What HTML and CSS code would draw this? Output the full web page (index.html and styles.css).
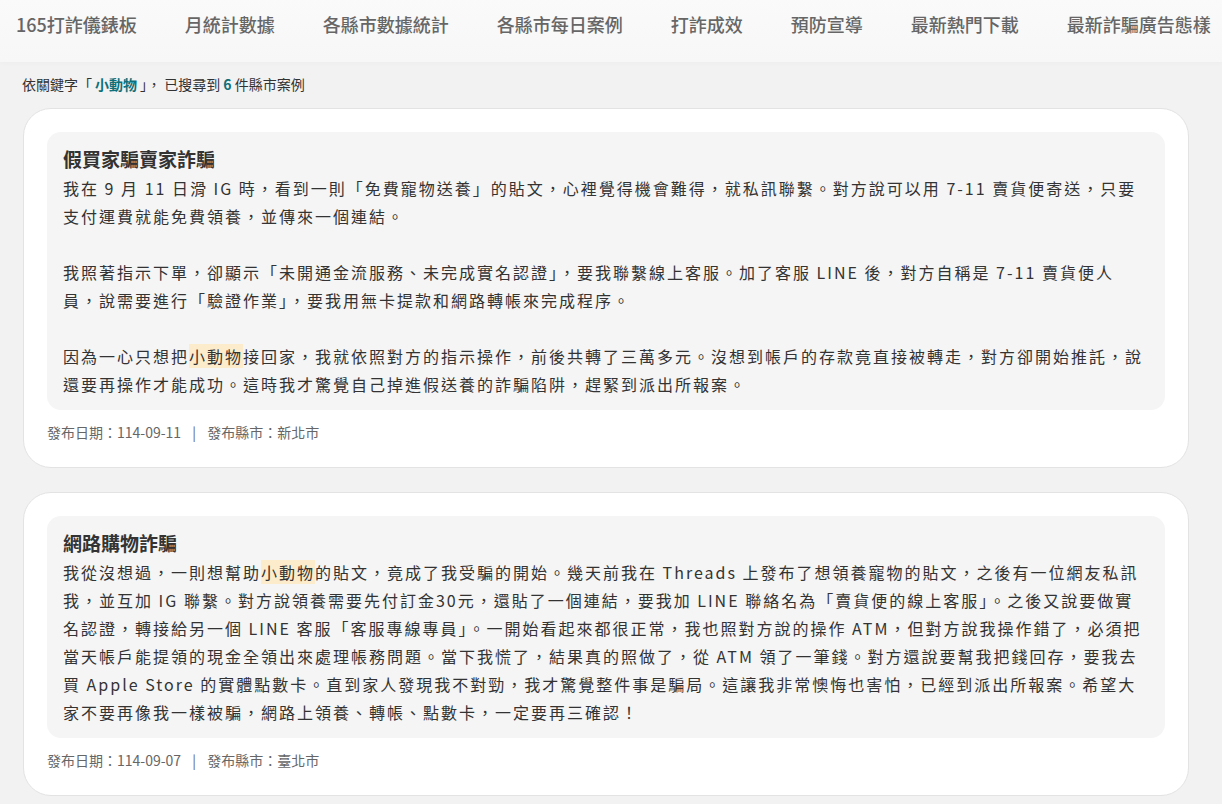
FILE: index.html
```html
<!DOCTYPE html>
<html lang="zh-Hant">
<head>
	<meta charset="utf-8">
	<title>165打詐儀錶板 - 各縣市每日案例</title>
	<link rel="stylesheet" href="styles.css">
</head>
<body>
	<header class="topbar">
		<nav class="nav">
			<a href="#">165打詐儀錶板</a>
			<a href="#">月統計數據</a>
			<a href="#">各縣市數據統計</a>
			<a href="#">各縣市每日案例</a>
			<a href="#">打詐成效</a>
			<a href="#">預防宣導</a>
			<a href="#">最新熱門下載</a>
			<a href="#">最新詐騙廣告態樣</a>
		</nav>
	</header>

	<main class="content">
		<p class="search-info">依關鍵字「<b class="kw">小動物</b>」， 已搜尋到 <b>6</b> 件縣市案例</p>

		<article class="case-card">
			<div class="case-body">
				<h2>假買家騙賣家詐騙</h2>
				<p class="case-text">我在 9 月 11 日滑 IG 時，看到一則「免費寵物送養」的貼文，心裡覺得機會難得，就私訊聯繫。對方說可以用 7-11 賣貨便寄送，只要支付運費就能免費領養，並傳來一個連結。

我照著指示下單，卻顯示「未開通金流服務、未完成實名認證」，要我聯繫線上客服。加了客服 LINE 後，對方自稱是 7-11 賣貨便人員，說需要進行「驗證作業」，要我用無卡提款和網路轉帳來完成程序。

因為一心只想把<mark>小動物</mark>接回家，我就依照對方的指示操作，前後共轉了三萬多元。沒想到帳戶的存款竟直接被轉走，對方卻開始推託，說還要再操作才能成功。這時我才驚覺自己掉進假送養的詐騙陷阱，趕緊到派出所報案。</p>
			</div>
			<div class="case-meta">發布日期：114-09-11 <span class="sep">|</span> 發布縣市：新北市</div>
		</article>

		<article class="case-card">
			<div class="case-body">
				<h2>網路購物詐騙</h2>
				<p class="case-text">我從沒想過，一則想幫助<mark>小動物</mark>的貼文，竟成了我受騙的開始。幾天前我在 Threads 上發布了想領養寵物的貼文，之後有一位網友私訊我，並互加 IG 聯繫。對方說領養需要先付訂金30元，還貼了一個連結，要我加 LINE 聯絡名為「賣貨便的線上客服」。之後又說要做實名認證，轉接給另一個 LINE 客服「客服專線專員」。一開始看起來都很正常，我也照對方說的操作 ATM，但對方說我操作錯了，必須把當天帳戶能提領的現金全領出來處理帳務問題。當下我慌了，結果真的照做了，從 ATM 領了一筆錢。對方還說要幫我把錢回存，要我去買 Apple Store 的實體點數卡。直到家人發現我不對勁，我才驚覺整件事是騙局。這讓我非常懊悔也害怕，已經到派出所報案。希望大家不要再像我一樣被騙，網路上領養、轉帳、點數卡，一定要再三確認！</p>
			</div>
			<div class="case-meta">發布日期：114-09-07 <span class="sep">|</span> 發布縣市：臺北市</div>
		</article>
	</main>
</body>
</html>
```

FILE: styles.css
```css
body {
	margin: 0;
	background-color: #f2f2f2;
	font-family: "Noto Sans CJK TC", "Noto Sans", sans-serif;
	color: #333;
}

.topbar {
	background: linear-gradient(to bottom, #fafafa, #f7f7f7);
	height: 62px;
	box-shadow: 0 2px 4px rgba(0, 0, 0, 0.02);
}

.nav {
	display: flex;
	gap: 48px;
	padding: 0 16px;
	height: 48px;
	align-items: center;
	white-space: nowrap;
	overflow: hidden;
}

.nav a {
	font-size: 18px;
	font-weight: 500;
	color: #666;
	text-decoration: none;
	line-height: 1;
}

.content {
	padding: 0 33px 0 22px;
}

.search-info {
	margin: 12px 0 14px;
	font-size: 14px;
	line-height: 20px;
	color: #333;
}

.search-info b {
	color: #0f7079;
	font-weight: 700;
}

.search-info .kw {
	margin: 0 3px;
}

.case-card {
	background-color: #fff;
	border: 1px solid #e3e3e3;
	border-radius: 28px;
	padding: 23px 23px 24px;
	margin: 0 0 24px 1px;
}

.case-body {
	background-color: #f5f5f5;
	border-radius: 14px;
	padding: 12px 16px;
}

.case-body h2 {
	margin: 0;
	font-size: 19px;
	line-height: 30px;
	font-weight: 700;
	color: #333;
}

.case-text {
	margin: 0;
	font-size: 16px;
	line-height: 28px;
	letter-spacing: 2px;
	color: #333;
	white-space: pre-line;
}

.case-text mark {
	background-color: #fdeccb;
	color: inherit;
}

.case-meta {
	margin-top: 12px;
	font-size: 14px;
	line-height: 21px;
	color: #666;
}

.case-meta .sep {
	margin: 0 8px;
}
```
